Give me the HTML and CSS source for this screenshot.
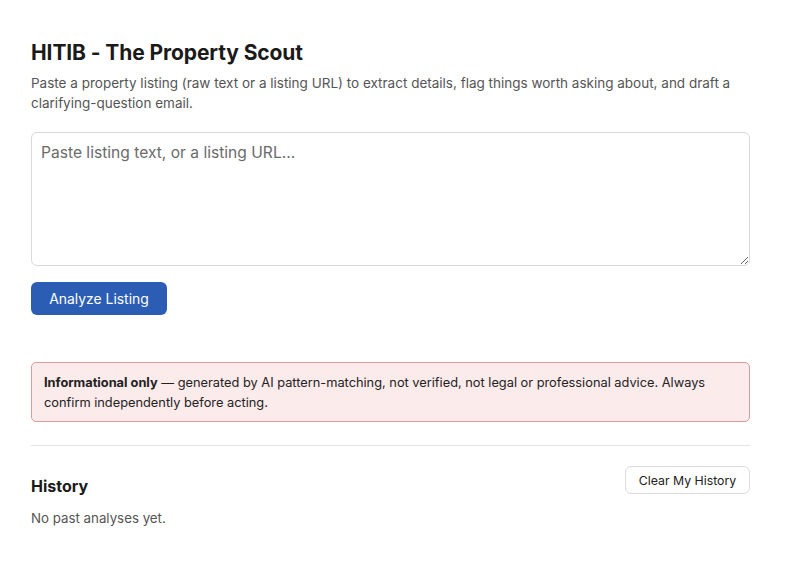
FILE: index.html
```html
<!DOCTYPE html>
<html>
<head>
<meta charset="utf-8">
<link rel="stylesheet" href="styles.css">
</head>
<body>
<main class="page">
  <h1 class="title">HITIB - The Property Scout</h1>
  <p class="lead">Paste a property listing (raw text or a listing URL) to extract details, flag things worth asking about, and draft a clarifying-question email.</p>
  <textarea class="input" placeholder="Paste listing text, or a listing URL..."></textarea>
  <div class="actions"><button class="btn-primary">Analyze Listing</button></div>
  <div class="notice"><strong>Informational only</strong> — generated by AI pattern-matching, not verified, not legal or professional advice. Always confirm independently before acting.</div>
  <hr class="rule">
  <section class="history">
    <div class="history-head">
      <h2 class="history-title">History</h2>
      <button class="btn-secondary">Clear My History</button>
    </div>
    <p class="empty">No past analyses yet.</p>
  </section>
</main>
</body>
</html>
```
FILE: styles.css
```css
html, body { margin: 0; padding: 0; background: #fff; }
body { font-family: Inter, "Noto Sans", sans-serif; color: #1a1a1a; }
.page { width: 719px; padding: 40px 0 0 31px; }
.title { font-size: 21px; font-weight: 700; margin: 0 0 7px; line-height: 26px; letter-spacing: -0.1px; }
.lead { font-size: 13.5px; line-height: 20px; color: #555; margin: 0 0 19px; }
.input { display: block; box-sizing: border-box; width: 719px; height: 134px; border: 1px solid #d9d9d9; border-radius: 6px; padding: 10px 9px 9px; font-family: Inter, "Noto Sans", sans-serif; font-size: 15.6px; color: #222; resize: vertical; margin: 0; }
.input::placeholder { color: #6b6b6b; }
.actions { margin-top: 16px; }
.btn-primary { background: #2b5db5; color: #fff; border: none; border-radius: 6px; height: 33px; width: 136px; font-family: Inter, "Noto Sans", sans-serif; font-size: 13.9px; padding: 0; }
.notice { margin-top: 47px; box-sizing: border-box; background: #fcebeb; border: 1px solid #dc9a9a; border-radius: 5px; padding: 10px 12px 8px; font-size: 12.8px; line-height: 20px; color: #222; }
.notice strong { font-weight: 700; }
.rule { border: none; border-top: 1px solid #e3e3e3; margin: 23px 0 0; }
.history-head { display: flex; justify-content: space-between; align-items: flex-end; margin-top: 20px; }
.history-title { font-size: 16px; font-weight: 700; margin: 0; line-height: 20px; }
.btn-secondary { background: #fff; border: 1px solid #dcdcdc; border-radius: 6px; height: 28px; width: 125px; font-family: Inter, "Noto Sans", sans-serif; font-size: 12.3px; color: #222; padding: 0; margin-bottom: 2px; }
.empty { font-size: 13.3px; color: #555; margin: 12px 0 0; line-height: 20px; }
```
